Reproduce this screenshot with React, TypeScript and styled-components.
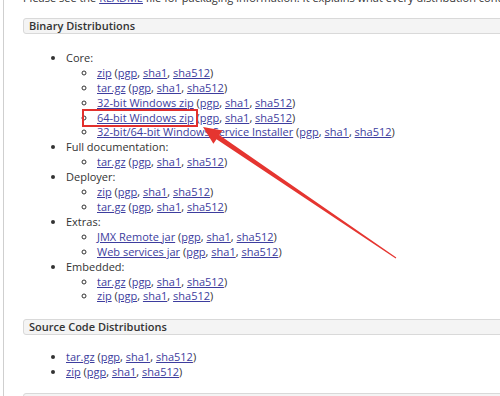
import styled, { createGlobalStyle } from "styled-components";

const GlobalStyle = createGlobalStyle`
  body {
    margin: 0;
    background: #fff;
    font-family: "Open Sans", "Liberation Sans", sans-serif;
    overflow: hidden;
  }
`;

const Page = styled.div`
  position: relative;
  height: 396px;
  margin-left: 3px;
  padding-left: 19px;
  border-left: 1px solid #cfcfcf;
  overflow: hidden;
  color: #333;
  font-size: 11px;
  line-height: 14.9px;
`;

const Intro = styled.p`
  margin: -9px 0 0;
  white-space: nowrap;
`;

const SectionHeader = styled.h3<{ top: number }>`
  margin: ${(p) => p.top}px -20px 0 0;
  height: 14px;
  padding: 0 5px;
  background: #f4f4f4;
  border: 1px solid #d9d9d9;
  border-radius: 3px;
  font-size: 11px;
  font-weight: 600;
  line-height: 14px;
  color: #333;
`;

const OuterList = styled.ul<{ top: number }>`
  margin: ${(p) => p.top}px 0 0;
  padding-left: 43px;
  list-style: disc;
`;

const InnerList = styled.ul`
  margin: 0;
  padding-left: 31px;
  list-style: circle;
`;

const Item = styled.li`
  white-space: nowrap;
`;

const Link = styled.a`
  color: #3d3d9e;
  text-decoration: underline;
`;

const Marked = styled.span`
  position: relative;
  &::after {
    content: "";
    position: absolute;
    left: -15px;
    top: -1px;
    right: -4px;
    bottom: -2px;
    border: 2px solid #e2302c;
  }
`;

const Arrow = styled.svg`
  position: absolute;
  left: -4px;
  top: 0;
  pointer-events: none;
`;

type Dist = { name: string; mark?: boolean };

const groups: { title: string; items: Dist[] }[] = [
  {
    title: "Core:",
    items: [
      { name: "zip" },
      { name: "tar.gz" },
      { name: "32-bit Windows zip" },
      { name: "64-bit Windows zip", mark: true },
      { name: "32-bit/64-bit Windows Service Installer" },
    ],
  },
  { title: "Full documentation:", items: [{ name: "tar.gz" }] },
  { title: "Deployer:", items: [{ name: "zip" }, { name: "tar.gz" }] },
  {
    title: "Extras:",
    items: [{ name: "JMX Remote jar" }, { name: "Web services jar" }],
  },
  { title: "Embedded:", items: [{ name: "tar.gz" }, { name: "zip" }] },
];

function Sigs() {
  return (
    <>
      {" "}(<Link href="#">pgp</Link>, <Link href="#">sha1</Link>,{" "}
      <Link href="#">sha512</Link>)
    </>
  );
}

function Entry({ d }: { d: Dist }) {
  return (
    <Item>
      {d.mark ? (
        <Marked>
          <Link href="#">{d.name}</Link>
        </Marked>
      ) : (
        <Link href="#">{d.name}</Link>
      )}
      <Sigs />
    </Item>
  );
}

export default function App() {
  return (
    <>
      <GlobalStyle />
      <Page>
        <Intro>
          Please see the <Link href="#">README</Link> file for packaging
          information. It explains what every distribution contains.
        </Intro>
        <SectionHeader top={12}>Binary Distributions</SectionHeader>
        <OuterList top={17}>
          {groups.map((g) => (
            <Item key={g.title}>
              {g.title}
              <InnerList>
                {g.items.map((d, i) => (
                  <Entry key={i} d={d} />
                ))}
              </InnerList>
            </Item>
          ))}
        </OuterList>
        <SectionHeader top={15}>Source Code Distributions</SectionHeader>
        <OuterList top={15}>
          <Entry d={{ name: "tar.gz" }} />
          <Entry d={{ name: "zip" }} />
        </OuterList>
        <SectionHeader top={13} />
        <Arrow width="500" height="396" viewBox="0 0 500 396">
          <polygon
            points="203,127 222.4,130.5 219.3,135 396.3,257.6 395.7,258.4 216.5,139.2 213.4,143.7"
            fill="#e53530"
          />
        </Arrow>
      </Page>
    </>
  );
}
